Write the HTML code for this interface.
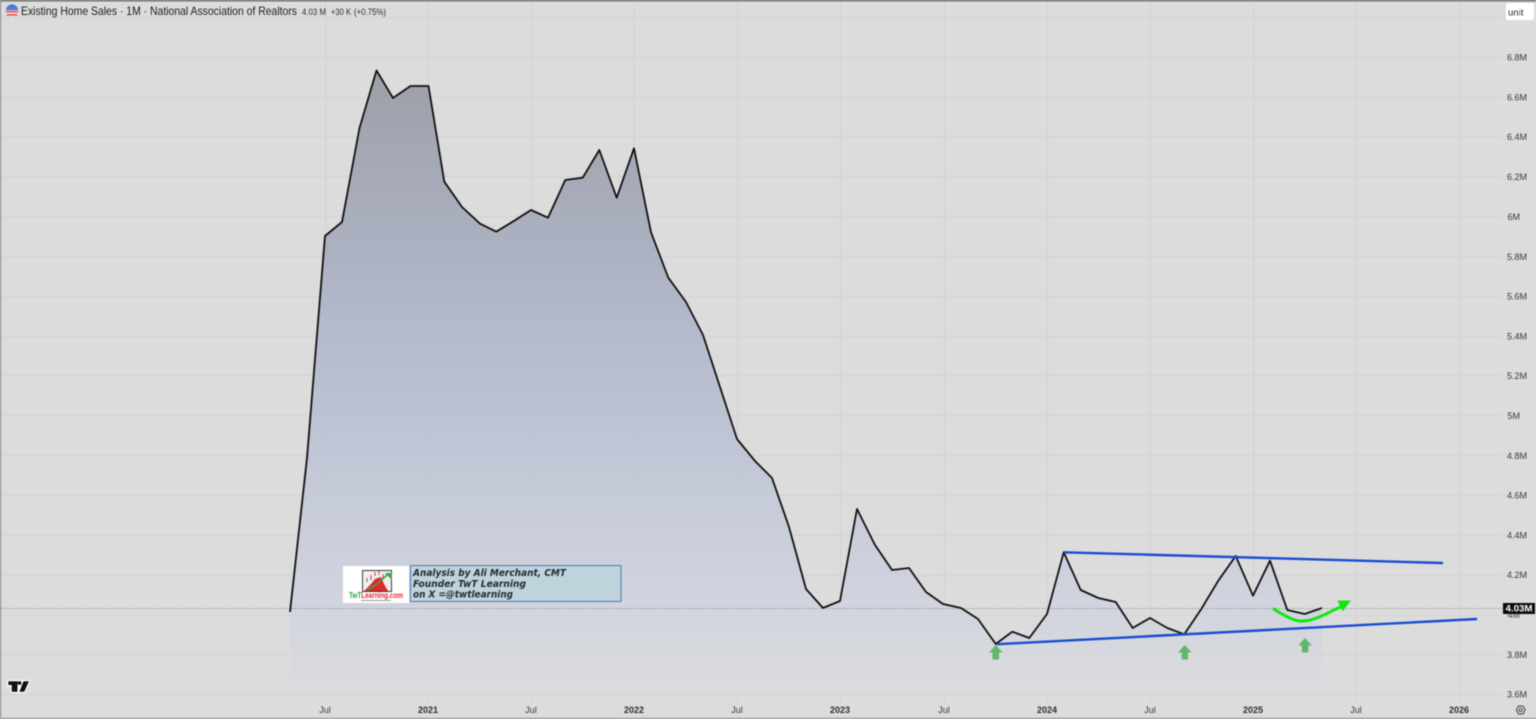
<!DOCTYPE html>
<html><head><meta charset="utf-8"><title>Existing Home Sales</title>
<style>
html,body{margin:0;padding:0;width:1536px;height:719px;overflow:hidden;background:#dcdcdc}
svg{display:block;filter:blur(.45px)}
text{font-family:"Liberation Sans",sans-serif}
</style></head><body>
<svg width="1536" height="719" viewBox="0 0 1536 719" xmlns="http://www.w3.org/2000/svg">
<defs>
<linearGradient id="f" gradientUnits="userSpaceOnUse" x1="0" y1="70" x2="0" y2="692">
<stop offset="0" stop-color="#999ca5"/>
<stop offset=".12" stop-color="#a0a4b0"/>
<stop offset=".38" stop-color="#afb5c9"/>
<stop offset=".7" stop-color="#c6cbda"/>
<stop offset=".88" stop-color="#d2d5df"/>
<stop offset="1" stop-color="#dbdcde"/>
</linearGradient>
</defs>
<rect width="1536" height="719" fill="#dcdcdc"/>
<!-- grid -->
<g stroke="#d2d2d2" stroke-width="1" shape-rendering="crispEdges">
<path d="M1 17.5H1502M1 57.5H1502M1 97.5H1502M1 136.5H1502M1 176.5H1502M1 216.5H1502M1 256.5H1502M1 296.5H1502M1 336.5H1502M1 375.5H1502M1 415.5H1502M1 455.5H1502M1 495.5H1502M1 535.5H1502M1 575.5H1502M1 615.5H1502M1 654.5H1502M1 694.5H1502"/>
<path d="M325.5 1V701M428.5 1V701M531.5 1V701M634.5 1V701M737.5 1V701M840.5 1V701M944.5 1V701M1047.5 1V701M1150.5 1V701M1253.5 1V701M1356.5 1V701M1459.5 1V701"/>
</g>
<!-- area -->
<path fill="url(#f)" fill-opacity=".94" d="M290 612L307 458L325 236L342 222L359.500 128L376.500 70.500L393 98L410.500 86L428.500 86L444.300 181.700L462 207L480 223.700L496.300 231.700L514.300 220.700L531 210L548 217.700L565.300 180L582.700 177.700L599.300 150L616.700 197.700L634 148.300L651 232.300L668.300 277.700L686 302L703 335L720 387L737 439L755 461L772 478L789 527L806 589L823 608L840 601L857 509L875 545L892 570L909 568L926 592L943 604L961 608L978 619L995.700 644L1012.300 631.700L1029.300 638L1047 614L1063.700 552.300L1080.700 590L1098.300 598L1115.700 602L1132.700 628L1150 618L1167.300 628L1184.300 634.300L1201.300 609L1218.300 580.700L1235.700 556L1253 595.700L1270 560.700L1287.300 610L1304.700 614L1322 608V692H290Z"/>
<!-- last price line -->
<path d="M1 608.500H1503" stroke="#7c7c7c" stroke-width="1" stroke-dasharray="1 2" fill="none"/>
<!-- series line -->
<path fill="none" stroke="#111" stroke-width="1.800" stroke-linejoin="round" d="M290 612L307 458L325 236L342 222L359.500 128L376.500 70.500L393 98L410.500 86L428.500 86L444.300 181.700L462 207L480 223.700L496.300 231.700L514.300 220.700L531 210L548 217.700L565.300 180L582.700 177.700L599.300 150L616.700 197.700L634 148.300L651 232.300L668.300 277.700L686 302L703 335L720 387L737 439L755 461L772 478L789 527L806 589L823 608L840 601L857 509L875 545L892 570L909 568L926 592L943 604L961 608L978 619L995.700 644L1012.300 631.700L1029.300 638L1047 614L1063.700 552.300L1080.700 590L1098.300 598L1115.700 602L1132.700 628L1150 618L1167.300 628L1184.300 634.300L1201.300 609L1218.300 580.700L1235.700 556L1253 595.700L1270 560.700L1287.300 610L1304.700 614L1322 608"/>
<!-- trend lines -->
<path d="M997 644.200L1477 619M1063.500 552.300L1443 563" stroke="#1a4cd2" stroke-width="2.400" fill="none"/>
<!-- curve arrow -->
<path d="M1274 609C1286 617 1296 622 1303 621C1316 621 1332 610 1343 606" fill="none" stroke="#0fe80f" stroke-width="3" stroke-linecap="round"/>
<path d="M1337.500 600.500L1351 600.500L1342.500 611.500Z" fill="#0fe80f"/>
<!-- green up arrows -->
<g fill="#62b56c">
<path d="M995.700 645L1002.500 652.500H999V659.500H992.500V652.500H989Z"/>
<path d="M1184.800 645L1191.600 652.500H1188V659.500H1181.600V652.500H1178Z"/>
<path d="M1305 638L1311.800 645.500H1308.300V652.500H1301.800V645.500H1298.300Z"/>
</g>
<!-- annotation -->
<rect x="343" y="566" width="66" height="37" fill="#fff"/>
<rect x="410.500" y="565.500" width="210.500" height="36" fill="#bfd3da" stroke="#5176b8" stroke-width="1"/>
<g font-style="italic" font-weight="700" font-size="9.600" fill="#222b33">
<text x="413" y="576" textLength="153" lengthAdjust="spacingAndGlyphs" style="font-family:'DejaVu Sans',sans-serif">Analysis by Ali Merchant, CMT</text>
<text x="413" y="587" textLength="113" lengthAdjust="spacingAndGlyphs" style="font-family:'DejaVu Sans',sans-serif">Founder TwT Learning</text>
<text x="413" y="597.500" textLength="100" lengthAdjust="spacingAndGlyphs" style="font-family:'DejaVu Sans',sans-serif">on X =@twtlearning</text>
</g>
<!-- logo -->
<rect x="362.500" y="570.500" width="29" height="21" fill="#efefef" stroke="#3c3c3c" stroke-width="1"/>
<path d="M364 591L371 584L375 579L381 577L384 584L388 591Z" fill="#e0282c"/>
<path d="M367 590L377 584L388 574" stroke="#3aa24a" stroke-width="1.700" fill="none"/>
<path d="M385 573H392V580Z" fill="#3aa24a"/>
<path d="M367 578v4M371 575v5M375 572v4M379 571v4M383 574v4" stroke="#c4453f" stroke-width="1"/>
<text x="349" y="598" font-size="8" font-weight="700" textLength="54" lengthAdjust="spacingAndGlyphs" fill="#e22a2a"><tspan fill="#2a9a44">TwT</tspan>Learning.com</text>
<rect x="361" y="600" width="30" height="1" fill="#9a9a9a"/>
<!-- header -->
<circle cx="12" cy="11" r="6" fill="#f1f1f1"/>
<path d="M6 11H18V12.600H6ZM6.700 14H17.300V15.800H6.700Z" fill="#e8584e"/>
<path d="M6 10.400A6 6 0 0 1 18 10.400Z" fill="#4a6fd8"/>
<path d="M8 7.500H16M7 9H17" stroke="#a8bcf0" stroke-width=".6" stroke-dasharray="1 1"/>
<text x="21" y="15" font-size="12" fill="#1c1c1c" textLength="276" lengthAdjust="spacingAndGlyphs">Existing Home Sales · 1M · National Association of Realtors</text>
<g font-size="9.500" fill="#2a2a2a">
<text x="302" y="15" textLength="24" lengthAdjust="spacingAndGlyphs">4.03 M</text>
<text x="331" y="15" textLength="20" lengthAdjust="spacingAndGlyphs">+30 K</text>
<text x="354" y="15" textLength="32" lengthAdjust="spacingAndGlyphs">(+0.75%)</text>
</g>
<!-- unit -->
<rect x="1506" y="3" width="28" height="17" rx="2" fill="#fff"/>
<text x="1508" y="15.500" font-size="9.500" fill="#222">un<tspan fill="#d2353a">i</tspan>t</text>
<!-- y labels -->
<g font-size="9" fill="#3a3a3a" text-anchor="end">
<text x="1527" y="60.500">6.8M</text><text x="1527" y="100.500">6.6M</text><text x="1527" y="140">6.4M</text><text x="1527" y="180">6.2M</text><text x="1520" y="220">6M</text><text x="1527" y="260">5.8M</text><text x="1527" y="299.500">5.6M</text><text x="1527" y="339.500">5.4M</text><text x="1527" y="379">5.2M</text><text x="1520" y="419">5M</text><text x="1527" y="459">4.8M</text><text x="1527" y="498.500">4.6M</text><text x="1527" y="538.500">4.4M</text><text x="1527" y="578">4.2M</text><text x="1520" y="618">4M</text><text x="1527" y="658">3.8M</text><text x="1527" y="697.500">3.6M</text>
</g>
<rect x="1503" y="603" width="32" height="11" fill="#0a0a0a"/>
<text x="1505.500" y="611.500" font-size="9" font-weight="700" fill="#fff" textLength="27" lengthAdjust="spacingAndGlyphs">4.03M</text>
<!-- x labels -->
<g font-size="9" text-anchor="middle" fill="#3a3a3a">
<text x="325" y="713">Jul</text><text x="531" y="713">Jul</text><text x="737" y="713">Jul</text><text x="944" y="713">Jul</text><text x="1150" y="713">Jul</text><text x="1356" y="713">Jul</text>
</g>
<g font-size="9" font-weight="700" text-anchor="middle" fill="#2e2e2e">
<text x="428" y="713">2021</text><text x="634" y="713">2022</text><text x="840" y="713">2023</text><text x="1047" y="713">2024</text><text x="1253" y="713">2025</text><text x="1459" y="713">2026</text>
</g>
<!-- settings -->
<path d="M1516.300 710L1518.500 706H1523L1525.200 710L1523 714H1518.500Z" fill="none" stroke="#444" stroke-width="1"/>
<circle cx="1520.700" cy="710" r="1.700" fill="none" stroke="#444" stroke-width="1"/>
<!-- TV logo -->
<path d="M8 681H29.500L24.500 692H11.500V685.500H8Z" fill="#fff" stroke="#fff" stroke-width="2" stroke-linejoin="round"/>
<path d="M8.300 681.300H17.500V691.700H11.700V685H8.300Z" fill="#111"/>
<circle cx="19.500" cy="683" r="1.900" fill="#111"/>
<path d="M23.500 681.300H29L24.300 691.700H19.300Z" fill="#111"/>
<!-- frame -->
<rect x="0" y="0" width="1536" height="1.500" fill="#6d6d6d"/>
<rect x="0" y="0" width="1" height="719" fill="#808080"/>
<rect x="0" y="717.800" width="1536" height="1.200" fill="#9a9a9a"/>
</svg>
</body></html>
